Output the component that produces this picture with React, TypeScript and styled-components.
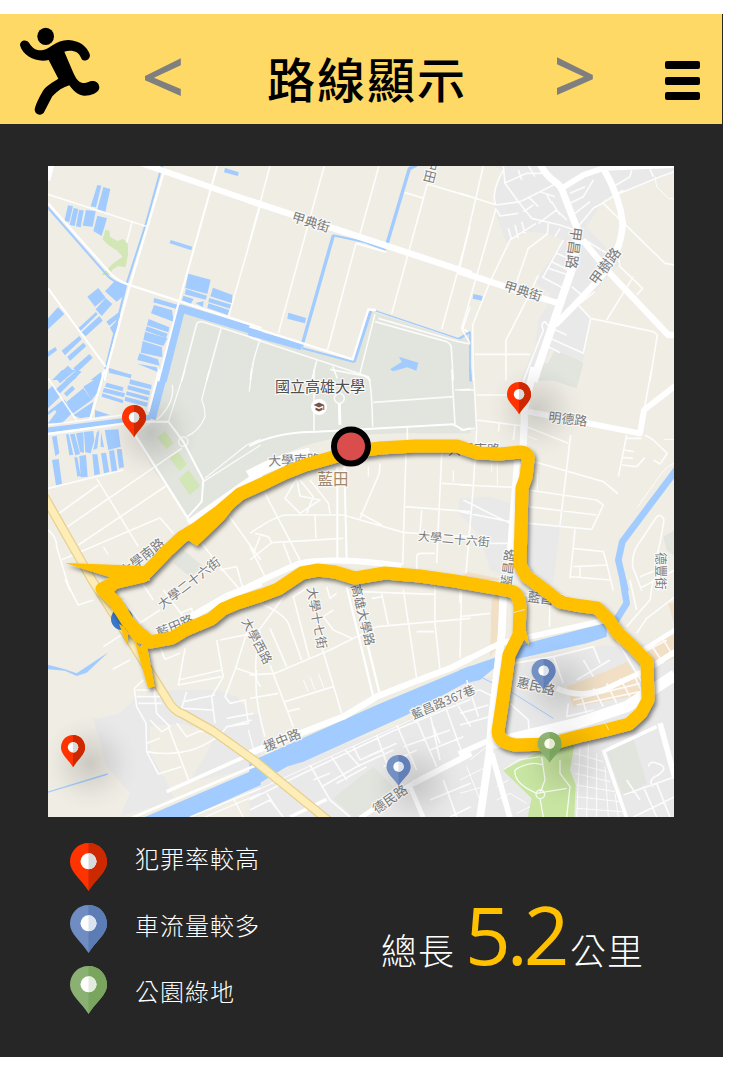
import React from 'react';
import styled, { createGlobalStyle } from 'styled-components';

const Global = createGlobalStyle`
  * { box-sizing: border-box; }
  body { margin: 0; background: #fff; font-family: "Liberation Sans", "Noto Sans CJK TC", sans-serif; }
`;

const Page = styled.div`padding-top: 14px;`;

const Screen = styled.main`
  width: 723px;
  height: 1043px;
  background: #262626;
  display: flex;
  flex-direction: column;
`;

const Header = styled.header`
  width: 722px;
  height: 110px;
  flex: none;
  background: #ffd966;
  display: flex;
  align-items: center;
  padding: 0 22px 0 18px;
  > svg { margin-top: 5px; }
`;

const Title = styled.h1`
  margin: 16px 0 0 82px;
  width: 202px;
  font: 500 48px/60px "Noto Sans CJK TC", sans-serif;
  letter-spacing: 2px;
  white-space: nowrap;
  color: #000;
`;

const Arrow = styled.button<{ $left: number; $top: number }>`
  border: 0;
  padding: 0;
  background: none;
  width: 44px;
  height: 80px;
  margin: ${p => p.$top}px 0 0 ${p => p.$left}px;
  font: 600 75px/80px "Open Sans", sans-serif;
  color: #7f7f7f;
`;

const MenuButton = styled.button`
  border: 0;
  padding: 0;
  background: none;
  width: 35px;
  margin: 23px 0 0 auto;
  display: flex;
  flex-direction: column;
  gap: 7.5px;
`;

const Bar = styled.span`
  height: 8px;
  border-radius: 2px;
  background: #000;
`;

const MapFrame = styled.section`
  margin: 42px 0 0 48px;
  width: 626px;
  height: 651px;
  flex: none;
  svg { display: block; }
`;

const Summary = styled.footer`
  display: flex;
  padding: 26px 0 0 70px;
`;

const Legend = styled.ul`
  list-style: none;
  margin: 0;
  padding: 0;
  width: 311px;
  display: flex;
  flex-direction: column;
  gap: 13.5px;
`;

const LegendRow = styled.li<{ $shift: number }>`
  display: flex;
  height: 48px;
  gap: 28px;
  span {
    font: 300 24px/36px "Noto Sans CJK TC", sans-serif;
    letter-spacing: 1px;
    color: #fff;
    margin-top: ${p => p.$shift}px;
  }
`;

const Total = styled.p`
  margin: 41px 0 0;
  display: flex;
  align-items: baseline;
  height: 100px;
  white-space: nowrap;
  font: 300 36px/100px "Noto Sans CJK TC", sans-serif;
  letter-spacing: 1px;
  color: #fff;
`;

const Distance = styled.strong`
  width: 105px;
  margin-left: 10px;
  font: 400 80px/100px "Open Sans", sans-serif;
  letter-spacing: -4px;
  color: #ffc000;
`;

type Tone = 'red' | 'blue' | 'green';
const tones: Record<Tone, [string, string, string]> = {
  red: ['#ff3300', '#cc2900', '#d9dadb'],
  blue: ['#6f8dc2', '#5c7cb6', '#dce3f0'],
  green: ['#8ab072', '#79a55e', '#e2ecdc'],
};

const PinShape = ({ tone }: { tone: Tone }) => (
  <>
    <path fill={tones[tone][0]} d="M18.5 0C29 0 37 8 37 19C37 29 26 36 18.5 48C11 36 0 29 0 19C0 8 8 0 18.5 0Z" />
    <path fill={tones[tone][1]} d="M18.5 0C29 0 37 8 37 19C37 29 26 36 18.5 48Z" />
    <circle fill="#fff" cx="18.5" cy="18.3" r="8" />
    <path fill={tones[tone][2]} d="M18.5 10.3a8 8 0 0 1 0 16Z" />
  </>
);

const Runner = () => (
  <svg width="84" height="92" viewBox="54 78 252 276" aria-label="runner">
    <ellipse cx="137" cy="109" rx="25" ry="26" />
    <path d="M60 136C60 122 77 116 87 128C98 146 110 152 126 151C152 148 165 120 205 120C240 121 262 142 269 162C273 175 260 184 250 181C243 178 242 165 232 158C220 151 205 151 193 155L219 216C228 237 236 247 248 249C262 250 264 243 280 243C292 244 298 253 298 264C296 279 270 288 252 287C232 286 220 272 208 256C190 262 172 272 157 289L134 333C128 350 104 347 104 328C108 308 122 285 129 272C140 256 160 245 175 236L146 180C110 188 70 170 60 136Z" />
  </svg>
);

type Line = [number, string];
interface Sheet {
  x: number;
  y: number;
  land?: [string, string][];
  water?: string;
  rivers?: Line[];
  roads: Line[];
}

const URBAN = '#e9e9e9';
const CAMPUS = '#e2e4de';
const PARK = '#d2e6b6';
const TAN = '#f1dfc6';

/* Each sheet is drawn at three times the size of the map, from its own corner. */
const sheets: Sheet[] = [
  {
    x: 40, y: 160,
    land: [
      [CAMPUS, 'M425 450L662 520V662H368Z'],
      [PARK, 'M196 210L208 212 210 230 232 243 250 237 263 250 264 285 256 322 235 318 218 328 208 345 184 345 205 325 222 308 248 290 232 272 205 255 188 238Z'],
    ],
    water: 'M172 75L184 77 168 142 152 139ZM190 81L211 87 196 155 172 148ZM84 136L99 139 88 186 73 184ZM101 144L115 147 104 198 89 194ZM117 150L131 151 122 202 108 199ZM138 150L167 154 158 200 128 197ZM172 167L201 175 185 228 160 213ZM555 24L596 37 594 48 552 37ZM392 240L457 260 454 271 389 250ZM225 362L257 380 254 405 230 425 195 394ZM175 384L197 413 165 440 142 410ZM197 414L217 432 185 468 167 448ZM115 505L168 456 173 463 122 512ZM125 517L178 468 188 482 137 529ZM24 475L54 442 73 462 24 508ZM24 575L46 561 51 571 24 591ZM65 572L118 528 125 538 75 586ZM82 590L130 548 139 558 90 603ZM100 625L148 582 158 593 112 637ZM36 660L84 617 97 630 62 660ZM75 660L104 640 110 652 102 660ZM199 485L236 457 241 470 208 497ZM210 503L232 480 236 500 222 525ZM445 341L512 359 502 402 436 384ZM438 387L501 407 497 419 434 403ZM430 407L461 417 452 432 426 421ZM466 429L491 424 489 441ZM519 383L577 405 576 430 511 409ZM508 414L574 434 571 446 505 426ZM505 430L568 450 563 465 502 444ZM343 414L412 434 408 446 340 427ZM342 435L396 451 401 485 333 460ZM326 477L388 502 385 517 321 496ZM320 499L383 521 378 533 316 512ZM315 515L382 535 370 558 310 540ZM308 543L366 561 367 592 302 578ZM298 580L354 598 359 617 292 600ZM292 611L350 622 353 636ZM208 624L273 644 271 654 206 634ZM152 660L183 636 185 660Z',
    rivers: [[24, 'M368 664L424 446 664 519'], [6, 'M366 17L316 197 258 377 187 664'], [6, 'M22 141L205 350Q225 368 258 377']],
    roads: [
      [18, 'M290 5L664 134'], [7, 'M370 40L322 200 269 378 202 622 193 662'], [5, 'M24 103L318 199M276 186L260 248M660 140L566 468'],
      [7, 'M24 130L205 333Q230 362 265 374L664 504'], [6, 'M24 385L197 620M532 17L415 432 355 664'],
      [5, 'M425 662L470 492Q475 482 490 486L662 541M543 506L500 662'], [3, 'M656 545Q640 600 632 660'], [18, 'M22 10L35 10 22 60'],
    ],
  },
  {
    x: 250, y: 160,
    land: [[CAMPUS, 'M-2 525L310 606 368 455 625 540 662 520V662H-2Z']],
    water: 'M115 458L168 474 165 490 112 476ZM447 590L505 608 499 632 472 622 430 634 420 628 455 606Z',
    rivers: [[21, 'M-4 516L155 560'], [10, 'M155 560L250 226'], [6, 'M248 226L340 245 408 270M155 564L312 606'], [10, 'M312 606L362 453M410 255L478 26 500 15'], [4, 'M375 452L625 536 660 515']],
    roads: [
      [19, 'M-4 121L664 341'], [5, 'M60 17L-2 250M223 17L85 520M387 17L330 222M318 250L232 572M532 72L425 462M463 97L522 115M532 72L660 110M660 200L575 508M660 440L637 510 660 550'],
      [6, 'M408 276L318 250'], [7, 'M-2 499L308 598 355 448 378 450'], [5, 'M-2 532L340 645 362 662M200 602L185 662M330 640L375 462M375 485L590 545Q603 550 604 565L610 662M385 475L625 545 660 552M248 620L262 655'], [3, 'M30 545Q5 600 0 660'],
    ],
  },
  {
    x: 460, y: 160,
    land: [
      [URBAN, 'M95 15L130 30 100 100 110 170 140 248 200 215 260 220 310 240 240 345 228 370 270 400 260 440 235 480 225 560 180 662H235L270 570 370 602 392 475 350 430 410 390 450 340 480 310 380 200 430 120 620 45 645 30V15Z'],
      [CAMPUS, 'M285 570L368 605 355 662H235ZM-2 550L28 515 35 662H-2Z'],
    ],
    water: 'M40 402L68 408 66 422 38 416Z',
    rivers: [[5, 'M-2 537L30 517V664']],
    roads: [
      [19, 'M-4 334L130 378 295 430M368 240L450 340 625 525H645'], [21, 'M240 10Q255 45 285 65Q305 80 310 100L355 215'],
      [24, 'M355 215L335 330 290 460 220 664'], [20, 'M285 495Q400 380 440 330Q485 260 488 190Q480 110 430 25'], [17, 'M310 82L370 45 430 24 645 15'],
      [5, 'M70 17L0 320M0 100L110 135M130 17L135 70 175 125 215 175 300 195 345 210M108 145L5 505 25 515M108 135Q95 110 115 60L130 30M110 135L180 125 240 95 290 70M110 150L120 168 175 160M132 70L200 40 250 40M265 190L262 222 205 265 165 380M228 190L150 240 88 370 38 495 40 662M235 345L200 420 138 540V662M45 583H210M430 130L615 310 645 315M345 210Q380 170 400 145L430 128 490 90M480 100L600 50 642 35M392 475L580 515 592 525 570 662M392 475L370 580 270 535M350 430L392 475M440 480L520 350M475 290L480 320 548 385 530 405M250 350L310 240M265 325L325 345M245 350L310 385M290 280L335 300M275 305L325 330M275 508L255 485Q240 490 250 510L190 662M275 505L320 525M265 560L300 578M145 205L155 240M165 195L175 235M185 185L195 220M240 95L285 110M260 105L275 130M275 125L300 165M235 190L290 150 320 180M330 130L370 110 400 60M345 160L390 125M330 100L375 80M460 80L510 50 515 30M565 17L580 50M335 380L365 405M360 430L405 395M375 240L440 280M175 30L185 60M205 17L225 50M190 155L220 135M205 110L235 140M300 205L285 230'],
      [3, 'M585 50L590 80 625 115 645 118'],
    ],
  },
  {
    x: 40, y: 370,
    land: [[CAMPUS, 'M385-2H662V300L450 450 335 290 285 195 345 150Z'], [PARK, 'M375 182L400 220 380 238 352 203ZM415 246L440 283 420 304 386 262ZM446 300L480 348 450 374 416 328Z'], [CAMPUS, 'M430 540L490 590 450 620 400 580Z']],
    water: 'M66 0L108 0 60 40 45 22ZM110 0L125 5 60 70 48 58ZM97 47L105 57 80 80 72 70ZM24 60L40 45 60 80 24 115ZM24 125L72 88 100 125 70 155 45 120 24 135ZM24 160L50 125 72 160ZM80 95L130 55 155 90 100 130ZM130 50L185 15 178 60 155 90ZM100 135L160 95 150 140 120 145ZM165 120L210 135 165 142ZM212 0L275 14 272 24 206 8ZM200 38L250 52 248 64 195 50ZM192 54L255 70 252 82 188 66ZM187 70L250 90 248 100 185 80ZM270 28L335 45 333 58 268 42ZM264 46L330 63 328 76 262 58ZM260 64L326 82 324 92 258 74ZM256 80L324 98 320 110 254 92ZM36 200L50 197 58 250 46 258ZM36 270L56 267 66 342 48 346ZM78 193L86 193 100 254 88 256ZM90 193L104 191 120 252 106 256ZM108 190L130 187 132 248 120 246ZM132 186L160 183 163 210 152 250 136 247ZM170 188L178 180 172 235 160 240ZM183 185L192 232 182 230ZM194 180L235 178 242 230 205 240ZM103 262L112 262 122 318 112 320ZM118 258L138 255 143 320 122 322ZM157 253L172 253 180 312 163 316ZM183 250L198 248 208 306 192 310ZM207 243L222 240 232 302 215 305ZM230 238L245 237 252 292 237 295Z',
    rivers: [[16, 'M20 181L330 142'], [24, 'M335 147L375-4']],
    roads: [
      [5, 'M24 165L250 135M24 25L112 155M24 355L250 300M170 325L295 530M50 435L175 345M78 473L425 235M115 525L378 348M64 570L360 443L400 490M24 480Q50 500 50 530L90 662'],
      [7, 'M24 192L255 160M195-2L150 150M358-2L325 125M285 195L450 455'], [6, 'M320 155H385L430 215 490 330 485 395 440 445'],
      [4, 'M416 215a14 14 0 1 0 28 0a14 14 0 1 0-28 0M440 200Q480 180 495 140Q495 110 485 90L508 0M385 155L435 0M397 45Q405 100 350 150M490 335L662 225M495 325L620 225 662 208M635 0L628 65M190 530L205 555'],
      [34, 'M450 465L664 315'], [5, 'M565 435L662 570M485 520L540 590 600 660M540 600L590 590 610 660'],
    ],
  },
  {
    x: 250, y: 370,
    land: [[CAMPUS, 'M-2-2H662V190L470 190Q250 190 130 240L-2 300Z']],
    roads: [
      [34, 'M-4 318Q80 270 180 250'], [6, 'M-2 228Q80 185 200 185L610 163 640 180 662 175'],
      [5, 'M192-2V185M240-2L355 20Q365 40 368 170M370 97L610 80M605-2L615 163M615 60L662 58M472 170V210M253 85a15 15 0 1 0 30 0a15 15 0 1 0-30 0M468 250L458 585M390 280L388 310 330 445M0 490Q80 435 110 435L280 435 460 487 662 500M330 430L395 465M45 370L150 570M140 325L105 385L150 430 210 390 150 378ZM180 330L235 400 240 430M150 330L190 380 170 430M195 435L198 505M65 518L280 505M65 518L55 500 15 490M65 518L0 570M0 530Q30 590 45 620M30 500L10 550M100 520L130 600M465 410L662 425M575 250L560 580M515 420L510 490M575 340L662 345M500 600V560Q500 550 515 550H555'],
      [9, 'M268 100L270 165'], [6, 'M262 290V565M283 290L290 565'], [4, 'M355 290V320M610 300V335'], [18, 'M-4 650Q100 600 150 580Q250 560 455 588'],
    ],
  },
  {
    x: 460, y: 370,
    land: [
      [CAMPUS, 'M-2-2H40L50 180H-2ZM235 10L250-20H370L350 55 290 35ZM610 500L645 480V560L620 540Z'],
      [URBAN, 'M-2 385L90 380 150 400 140 620 90 600 60 500-2 430ZM200 460L300 470 280 640 200 620Z'], [TAN, 'M20 605L140 630H-2Z'],
    ],
    rivers: [[20, 'M650 298L487 515 475 570 497 664'], [5, 'M30-10L34 35']],
    roads: [
      [22, 'M222-8L195 110 188 260'], [18, 'M172 260L150 540M205 125L540 190 552 120 645 48'],
      [5, 'M0 60H45M40-2L50 180 40 350 18 610M0 180L45 175M50 75H140M50 150L190 168M118 160L115 185M165 165L160 210M200 170L325 220M332 195L300 465M205 270L430 335 475 372M0 345L165 352M205 360L410 390 430 405 395 478 150 455 0 425M205 410L410 435M345 478L330 625M340 535L430 545 440 580 460 662M340 590L440 585M330 620L450 630M360 590V620M575-2L552 120M500 195L475 320M500 205L545 205M555 195L580 210 622 250 600 282 580 270M490 240L522 245M488 262L520 265M485 285L530 290 555 262M545 662L518 590Q515 560 530 530L590 440Q605 430 612 450Q605 500 590 560Q590 620 595 662M540 620L590 600M540 655L645 600M90 520H150M10 390L80 425 150 460'],
      [3, 'M205 200L232 210M612 208H642M642 280Q615 290 590 330L532 412M95 280V305M112 275V345M232 310V360'],
    ],
  },
  {
    x: 40, y: 580,
    land: [[URBAN, 'M160 418L240 400 290 350 400 330H530L590 350 662 440V560L480 600 360 560 400 650 340 680 240 711 270 640 200 560Z'], ['#efede4', 'M330 440L420 430 530 460 500 520 450 600 370 590 330 520Z']],
    water: 'M24 254L75 268 110 280 205 217 140 278 110 288 75 272 24 268ZM315 711L662 561V615L450 711Z',
    rivers: [[4, 'M22 637L203 582']],
    roads: [
      [22, 'M430 125L560 50 664 8'], [8, 'M275 714L662 550'], [11, 'M380 635L664 508'],
      [5, 'M75-2L115 75 160 60M190 200L360 90M218 268L270 240M450 711L662 625M310 300L283 325 290 380 318 430 320 515 355 582 425 560M320 515Q400 530 470 505Q540 475 560 440M385 440L448 605M290 350H370M295 370H365M320 490L360 475M340 300L350 400 390 440 365 455 330 420M410 430L440 470 475 455 520 450M440 335L425 385 520 390M430 365L525 345M435 205L415 315 545 290M415 300L545 270M530 180L550 290 515 350 525 430M360 200L375 238 420 220M540 180L662 155M620 160L585 270 555 350 570 370 615 360 625 430 560 440M590 265L650 285M560 415L640 400M565 440L635 420M662 320Q640 300 650 220M290 330H330M370 30L430 110M300 0L340 60M250 60L300 125M420 100L455 85 460 110'],
      [4, 'M495 711L662 640M580 655L610 711M625 450L640 505'],
    ],
  },
  {
    x: 250, y: 580,
    land: [[URBAN, 'M-2 620L200 520 430 440 662 330V713H-2ZM-2 400L30 405 40 500-2 520Z'], [CAMPUS, 'M250 655L370 560 430 620 340 711H310Z']],
    water: 'M-2 546L380 375 662 257V300L470 405 160 545 110 560-2 628Z',
    roads: [
      [19, 'M-4 521L60 495 280 410 380 350 480 310 600 265 664 233'], [7, 'M290 20L370 350M312 30L390 345'],
      [5, 'M-2 285L75 280 240 210 380 140 662 115M460 30L500 295M395 40L415 135M555-2V130L570 270M635-2L630 235M330 35L555 43M105 45L20 160M30 70Q100 100 115 130L155 240M170 25L130 50L178 235M60 145L110 260M60 255L130 440M215 200L275 400M105 365L250 320M0 355L85 340M20 270Q10 350 45 470M250 90L220 110 250 150 305 175M230 20L240 55 260 40M500 155H552M110 395L150 385M365 55L400 50'],
      [3, 'M160 300L175 335M180 290L195 330M205 280L222 325M0 640L500 412 662 345'],
      [18, 'M490 610L664 520'], [14, 'M330 714L490 610M480 620L520 713'], [10, 'M120 711L230 658'],
      [5, 'M-2 660L160 580 430 452 662 358M180 555L240 660 300 711M245 530L290 600M215 620L320 560 430 510M285 510L330 560M310 500L330 540 400 510M380 465L410 550M440 435L500 570M500 420L560 560M540 400L570 540M590 390L640 530M620 370L662 440M350 530L440 490M460 500L600 450M540 510L640 470M580 600L620 711M540 660L662 610M0 690L60 660 100 711M50 640L90 700M600 711L662 680M100 600L130 640M260 610L350 560M190 600L240 580M550 440L570 490M400 560L500 510'],
    ],
  },
  {
    x: 460, y: 580,
    land: [
      [URBAN, 'M-2 300L100 290 150 240 440 195 520 210 645 150V713H-2Z'],
      [TAN, 'M95 60L130 30 125 180 90 230ZM320 320L460 265 500 245 540 300V345L340 380ZM540 205L642 165V235L580 262ZM625 70H645V140Z'],
      [CAMPUS, 'M440 510L520 475 560 610 490 650 460 570Z'],
      ['#c8e5a1', 'M128 570L230 520 345 485 330 570 347 615 343 711H203L215 655Z'],
    ],
    water: 'M-2 270L100 235 200 190 440 128 440 170 380 190 180 235 120 250 60 300-2 314Z',
    rivers: [[20, 'M488-4L500 70 450 150'], [3, 'M60 290L160 340 280 415']],
    roads: [
      [23, 'M130 40L125 160 95 420 88 520 60 714'], [17, 'M-4 252L120 190 210 170 440 120M95 520L150 714M-4 522L90 480'],
      [34, 'M100 490L350 430 500 380 645 285'], [17, 'M290 325Q350 355 430 330L560 270 645 215M600 430L645 595'], [14, 'M470 165L540 215 645 150'], [11, 'M430 510L500 714M430 515L590 440'],
      [5, 'M160 250L280 230 400 200 420 250M350 300L450 240M280 230L310 310M400 290L370 240M470 180L560 330M340 360L540 310M350 375L540 335M325 370L320 410 400 390M360 335L380 400M400 325L430 380M440 310L470 370M480 295L510 350M520 280L545 335M150 370L205 420 208 460M130 340L100 380M0 340L60 330 120 360M0 400L85 375M20 300L55 410M0 435L90 410M540 660L500 600M490 645L645 590M520 711L645 650M550 620L590 711M590 610L630 711M565 560Q570 540 590 550Q630 560 595 585Q560 600 580 620M555 215L620 180M570 190L610 250M605 170L640 230M510 0L530 90M580-2L570 60 500 140M645 50L560 115 530 160M0 110L90 100M165 40L270 60 268 140M0 30V70'],
      [3, 'M345 520L430 545M340 550L440 575M345 580L450 605M350 615L465 635M350 650L480 665M350 685L490 695M360 500L350 711M385 490L380 711M410 520L410 711M435 560L445 711M465 640L475 711M0 600L80 560M0 640L70 620M20 560L60 660M110 660L150 640 200 670M170 700L210 680M110 620L145 600M130 570L175 540 240 530M30 540L80 500'],
      [4, 'M245 530L255 600 240 640M165 570Q210 540 250 555M165 570Q160 610 230 640L320 625M300 540L300 580 330 620 320 711M228 643a13 13 0 1 0 26 0a13 13 0 1 0-26 0M240 655L250 711'],
    ],
  },
];

interface LabelSpec { text: string; x: number; y: number; r: number; size?: number; fill?: string }
const labels: LabelSpec[] = [
  { text: '甲典街', x: 311, y: 222, r: 17 },
  { text: '中田', x: 431.5, y: 170.5, r: 104 },
  { text: '甲典街', x: 523, y: 291, r: 17 },
  { text: '甲昌路', x: 574, y: 248, r: 98, size: 14 },
  { text: '甲樹路', x: 605, y: 266, r: -54, size: 14 },
  { text: '明德路', x: 568, y: 419, r: 7 },
  { text: '國立高雄大學', x: 320, y: 386, r: 0, size: 15, fill: '#4e4e4e' },
  { text: '藍田', x: 333, y: 479, r: 0, size: 15.5, fill: '#a3876a' },
  { text: '大學南路', x: 294, y: 460, r: -2 },
  { text: '大學南路', x: 142, y: 557, r: -38 },
  { text: '大學二十六街', x: 189, y: 583, r: -38, size: 12.5 },
  { text: '大學二十六街', x: 454, y: 539, r: 5, size: 12 },
  { text: '大學南路', x: 474, y: 449, r: 0 },
  { text: '藍昌路', x: 508, y: 568, r: -83 },
  { text: '藍昌路', x: 547, y: 599, r: 8 },
  { text: '德豐街', x: 661, y: 571, r: 90, size: 12.5 },
  { text: '藍田路', x: 175, y: 626, r: -23 },
  { text: '大學西路', x: 257, y: 641, r: 62, size: 12.5 },
  { text: '大學十七街', x: 317, y: 618, r: 80, size: 12.5 },
  { text: '高雄大學路', x: 363, y: 615, r: 76, size: 12.5 },
  { text: '援中路', x: 282, y: 740, r: -22 },
  { text: '藍昌路367巷', x: 443, y: 702, r: -23, size: 12 },
  { text: '德民路', x: 390, y: 799, r: -35 },
  { text: '惠民路', x: 536, y: 686, r: 13 },
];

const Label = styled.text`
  font-family: "Noto Sans CJK TC", sans-serif;
  font-weight: 400;
  text-anchor: middle;
  paint-order: stroke;
  stroke: #fafaf8;
  stroke-width: 2.4px;
  stroke-linejoin: round;
`;

const pins: { x: number; y: number; tone: Tone }[] = [
  { x: 122, y: 405, tone: 'red' },
  { x: 507, y: 382, tone: 'red' },
  { x: 61, y: 735, tone: 'red' },
  { x: 386.5, y: 755, tone: 'blue' },
  { x: 531.5, y: 659, tone: 'blue' },
  { x: 537.5, y: 732, tone: 'green' },
];

const highway = 'M44 496L92 580 130 640 167 699Q173 711 183 714L213 731 255 761 330 822';
const route = 'M143 576L167 551 182 537 197 528 220 511 240 494 262 484 285 473 305 465 330 458 350 452 380 448 415 446 457 446 478 453 500 454 520 452Q529 452 528 460L526 477 522 488 520 565 526 576 545 590 560 602 575 605 597 608 609 620 617 632 633 647 647 662 648 700 641 713 629 724 606 730 580 736 550 744 515 745Q498 742 498 731L502 705 509 655 519 635 520 608Q519 592 510 591L495 588 455 581 420 576 385 573 355 578 335 572 318 570 302 573 278 589 262 595 237 603 223 609 211 619 185 630 172 638 150 642 138 632 128 622 116 603 102 589 113 583Z';

const CityMap = () => (
  <svg width="626" height="651" viewBox="48 166 626 651">
    <defs>
      <filter id="routeShadow" x="-10%" y="-10%" width="120%" height="120%">
        <feDropShadow dx="2" dy="3" stdDeviation="2" floodColor="#000" floodOpacity="0.5" />
      </filter>
      <radialGradient id="pinShade">
        <stop offset="0" stopColor="#000" stopOpacity="0.15" />
        <stop offset="0.4" stopColor="#000" stopOpacity="0.08" />
        <stop offset="0.75" stopColor="#000" stopOpacity="0.02" />
        <stop offset="1" stopColor="#000" stopOpacity="0" />
      </radialGradient>
    </defs>
    <rect x="48" y="166" width="626" height="651" fill="#efede4" />
    {sheets.map((s, i) => (
      <g key={i} transform={`translate(${s.x} ${s.y}) scale(.33333)`}>
        {s.land?.map(([fill, d], n) => <path key={n} fill={fill} d={d} />)}
      </g>
    ))}
    {sheets.map((s, i) => (
      <g key={i} transform={`translate(${s.x} ${s.y}) scale(.33333)`} strokeLinejoin="round">
        <path fill="#a2cbff" d={s.water} />
        {s.rivers?.map(([w, d], n) => <path key={n} fill="none" stroke="#a2cbff" strokeWidth={w} d={d} />)}
      </g>
    ))}
    {sheets.map((s, i) => (
      <g key={i} transform={`translate(${s.x} ${s.y}) scale(.33333)`} fill="none" stroke="#fff" strokeLinejoin="round">
        {s.roads.map(([w, d], n) => <path key={n} strokeWidth={w} strokeOpacity={w < 6 ? 0.85 : 1} d={d} />)}
      </g>
    ))}
    <path d={highway} fill="none" stroke="#e6d08f" strokeWidth="9.5" strokeLinejoin="round" />
    <path d={highway} fill="none" stroke="#feedb7" strokeWidth="7" strokeLinejoin="round" />
    {labels.map((l, i) => (
      <Label key={i} fontSize={l.size ?? 13} fill={l.fill ?? '#7c7c7c'} transform={`translate(${l.x} ${l.y}) rotate(${l.r})`} y={(l.size ?? 13) * 0.37}>
        {l.text}
      </Label>
    ))}
    <circle cx="319" cy="407" r="8" fill="#fff" />
    <path d="M313.5 405L319 402.5 324.5 405 319 407.5ZM315.5 407.5V410L319 411.5 322.5 410V407.5L319 409ZM323.3 405.5H324.3V410H323.3Z" fill="#795548" />
    <circle cx="122" cy="619" r="11" fill="#3b78c8" />
    <g filter="url(#routeShadow)" fill="#ffc000">
      <path d={route} fill="none" stroke="#ffc000" strokeWidth="13" strokeLinejoin="round" />
      <path d="M65 563L145 566 150 580 141 583 116 579 90 571ZM103 582L120 577 118 588 108 597ZM188 540L197 546 224 520 235 506 203 518ZM112 590L122 600 133 620 148 632 140 648 126 630 112 609ZM135 642L148 688 154.500 686.500 147 646ZM119 624L126.500 643 129 630ZM522 612L529 645 523 638Z" />
    </g>
    <path d="M604.500 723L607 726 608.500 730M513.500 612.500L525 609.500" fill="none" stroke="#eee6d2" strokeWidth="1" />
    {pins.map((p, i) => <circle key={i} cx={p.x + 29} cy={p.y + 28} r="48" fill="url(#pinShade)" />)}
    {pins.map((p, i) => (
      <g key={i} transform={`translate(${p.x} ${p.y}) scale(.65 ${p.tone === 'red' ? 0.67 : 0.64})`} opacity={p.tone === 'red' ? 1 : 0.95}>
        <PinShape tone={p.tone} />
      </g>
    ))}
    <circle cx="351" cy="446.500" r="17" fill="#d94d4d" stroke="#000" strokeWidth="6" />
  </svg>
);

const legend: { tone: Tone; label: string; shift: number }[] = [
  { tone: 'red', label: '犯罪率較高', shift: -3 },
  { tone: 'blue', label: '車流量較多', shift: 2 },
  { tone: 'green', label: '公園綠地', shift: 7 },
];

export default function App() {
  return (
    <Page>
      <Global />
      <Screen>
        <Header>
          <Runner />
          <Arrow $left={39} $top={11}>&lt;</Arrow>
          <Title>路線顯示</Title>
          <Arrow $left={84} $top={9}>&gt;</Arrow>
          <MenuButton aria-label="menu"><Bar /><Bar /><Bar /></MenuButton>
        </Header>
        <MapFrame><CityMap /></MapFrame>
        <Summary>
          <Legend>
            {legend.map(item => (
              <LegendRow key={item.tone} $shift={item.shift}>
                <svg width="37" height="48" viewBox="0 0 37 48"><PinShape tone={item.tone} /></svg>
                <span>{item.label}</span>
              </LegendRow>
            ))}
          </Legend>
          <Total>總長<Distance>5.2</Distance>公里</Total>
        </Summary>
      </Screen>
    </Page>
  );
}
